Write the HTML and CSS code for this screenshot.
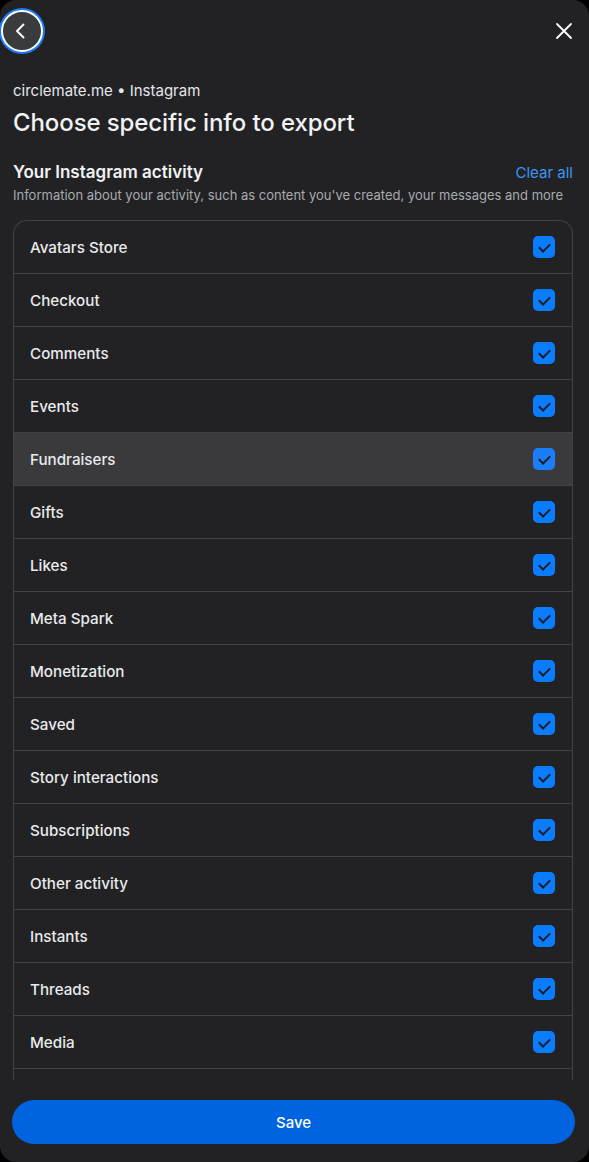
FILE: index.html
```html
<!DOCTYPE html>
<html lang="en">
<head>
<meta charset="utf-8">
<title>Choose specific info to export</title>
<link rel="stylesheet" href="styles.css">
</head>
<body>
<div class="panel">
  <div class="topbar">
    <div class="back" role="button" aria-label="Back">
      <svg width="18" height="18" viewBox="0 0 18 18"><path d="M11.5 2.5 5 9l6.5 6.5" fill="none" stroke="#fff" stroke-width="1.9" stroke-linecap="round" stroke-linejoin="round"/></svg>
    </div>
    <div class="close" role="button" aria-label="Close">
      <svg width="18" height="18" viewBox="0 0 18 18"><path d="M2 2 16 16M16 2 2 16" fill="none" stroke="#fff" stroke-width="1.8" stroke-linecap="round"/></svg>
    </div>
  </div>
  <div class="intro">
    <div class="context">circlemate.me • Instagram</div>
    <h1 class="title">Choose specific info to export</h1>
    <div class="section-head">
      <span class="section-title">Your Instagram activity</span>
      <span class="clear">Clear all</span>
    </div>
    <p class="section-sub">Information about your activity, such as content you've created, your messages and more</p>
  </div>
  <div class="scroll">
    <ul class="list">
      <li class="row"><span>Avatars Store</span><span class="check"></span></li>
      <li class="row"><span>Checkout</span><span class="check"></span></li>
      <li class="row"><span>Comments</span><span class="check"></span></li>
      <li class="row"><span>Events</span><span class="check"></span></li>
      <li class="row hover"><span>Fundraisers</span><span class="check"></span></li>
      <li class="row"><span>Gifts</span><span class="check"></span></li>
      <li class="row"><span>Likes</span><span class="check"></span></li>
      <li class="row"><span>Meta Spark</span><span class="check"></span></li>
      <li class="row"><span>Monetization</span><span class="check"></span></li>
      <li class="row"><span>Saved</span><span class="check"></span></li>
      <li class="row"><span>Story interactions</span><span class="check"></span></li>
      <li class="row"><span>Subscriptions</span><span class="check"></span></li>
      <li class="row"><span>Other activity</span><span class="check"></span></li>
      <li class="row"><span>Instants</span><span class="check"></span></li>
      <li class="row"><span>Threads</span><span class="check"></span></li>
      <li class="row"><span>Media</span><span class="check"></span></li>
      <li class="row"></li>
    </ul>
  </div>
  <div class="footer">
    <button class="save">Save</button>
  </div>
</div>
</body>
</html>
```
FILE: styles.css
```css
* { box-sizing: border-box; }
html, body { margin: 0; padding: 0; background: #000; }
body { font-family: Inter, "Noto Sans", "Liberation Sans", sans-serif; color: #e4e6eb; }
.panel {
  width: 589px; height: 1162px; background: #222224; border-radius: 16px;
  overflow: hidden; display: flex; flex-direction: column;
}
.topbar { height: 62px; display: flex; align-items: center; justify-content: space-between; padding: 0 15px 0 1px; flex: none; }
.back {
  width: 42px; height: 42px; border-radius: 50%; background: #3a3b3d; flex: none;
  border: 2px solid #fff; box-shadow: 0 0 0 2px #1a7cf5;
  display: flex; align-items: center; justify-content: center; padding-right: 2px; cursor: pointer;
}
.close { width: 20px; height: 20px; display: flex; align-items: center; justify-content: center; cursor: pointer; }
.intro { padding: 19px 13px 0 13px; flex: none; }
.context { font-size: 15px; line-height: 20px; color: #e4e6eb; }
.title { margin: 7px 0 0; font-size: 24px; line-height: 30px; font-weight: 500; color: #f0f2f5; letter-spacing: -0.1px; }
.section-head { margin-top: 23px; display: flex; justify-content: space-between; align-items: center; height: 22px; }
.section-title { font-size: 17px; font-weight: 600; color: #f0f2f5; }
.clear { font-size: 15px; color: #3b97f6; padding-right: 3px; }
.section-sub { margin: 3px 0 0; font-size: 13px; line-height: 18px; color: #a8abaf; }
.scroll { margin: 16px 16px 0 13px; flex: 1; overflow: hidden; }
.list { list-style: none; margin: 0; padding: 0; border: 1px solid #414146; border-radius: 14px 14px 0 0; border-bottom: 0; }
.row {
  height: 53px; display: flex; align-items: center; justify-content: space-between;
  padding: 0 17px 0 16px; border-top: 1px solid #414146; font-size: 15.2px; font-weight: 500; color: #e9eaec;
}
.row:first-child { border-top: 0; height: 52px; }
.row.hover { background: #3a3a3d; }
.check {
  width: 22px; height: 22px; border-radius: 5px; background: #0a7cff; position: relative; flex: none;
}
.check::after {
  content: ""; position: absolute; left: 7.5px; top: 4.5px; width: 5px; height: 9px;
  border: solid #1c1c1e; border-width: 0 2.5px 2.5px 0; transform: rotate(45deg);
}
.row.hover .check { background: #1a7ef8; }
.footer { flex: none; padding: 20px 14px 18px 12px; }
.save {
  width: 100%; height: 44px; border-radius: 22px; border: 0; background: #0064e0;
  color: #fff; font-family: inherit; font-size: 15px; font-weight: 500;
}
```
